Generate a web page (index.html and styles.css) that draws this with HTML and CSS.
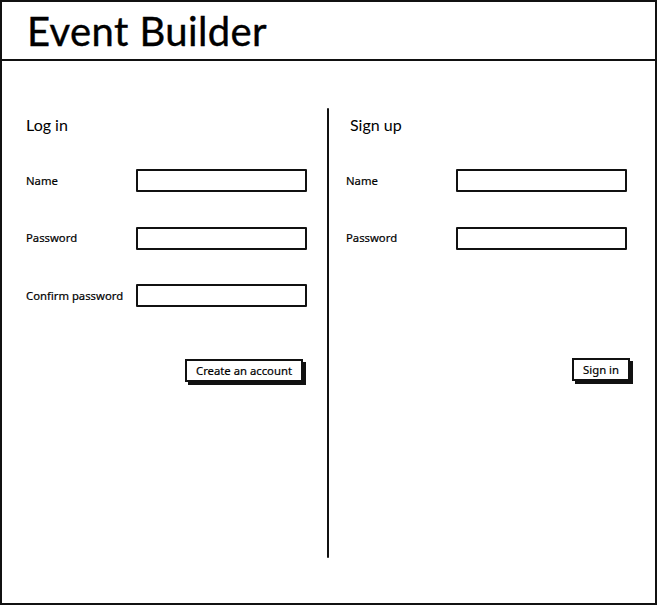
FILE: index.html
```html
<!DOCTYPE html>
<html lang="en">
<head>
<meta charset="utf-8">
<title>Event Builder</title>
<link rel="stylesheet" href="styles.css">
</head>
<body>
<div class="frame">
  <header class="header">
    <h1 class="title">Event Builder</h1>
  </header>
  <main class="main">
    <section class="panel panel-left">
      <h2 class="panel-title">Log in</h2>
      <div class="form">
        <div class="row"><span class="label">Name</span><span class="input"></span></div>
        <div class="row"><span class="label">Password</span><span class="input"></span></div>
        <div class="row"><span class="label">Confirm password</span><span class="input"></span></div>
        <div class="actions actions-left"><button class="btn" type="button">Create an account</button></div>
      </div>
    </section>
    <div class="divider"></div>
    <section class="panel panel-right">
      <h2 class="panel-title panel-title-indent">Sign up</h2>
      <div class="form">
        <div class="row"><span class="label">Name</span><span class="input"></span></div>
        <div class="row"><span class="label">Password</span><span class="input"></span></div>
        <div class="actions actions-right"><button class="btn" type="button">Sign in</button></div>
      </div>
    </section>
  </main>
</div>
</body>
</html>
```

FILE: styles.css
```css
* { box-sizing: border-box; }
html, body { margin: 0; padding: 0; background: #fff; }
body { font-family: "Noto Sans", "DejaVu Sans", sans-serif; color: #000; }

.frame {
  width: 657px;
  height: 605px;
  border: 2px solid #111;
  display: flex;
  flex-direction: column;
}

.header {
  height: 59px;
  border-bottom: 2px solid #111;
  display: flex;
  align-items: center;
  padding-left: 25px;
  flex: none;
}
.title {
  margin: 0;
  font-family: Lato, "Open Sans", sans-serif;
  font-weight: 400;
  font-size: 40px;
  line-height: 44px;
  letter-spacing: 0.4px;
  -webkit-text-stroke: 0.4px #000;
}

.main {
  flex: 1;
  display: flex;
}

.panel { padding-top: 54px; }
.panel-left { width: 325px; padding-left: 24px; }
.panel-right { flex: 1; padding-left: 17px; }

.panel-title {
  margin: 0 0 34px;
  font-family: Lato, "Open Sans", sans-serif;
  font-weight: 400;
  font-size: 16px;
  line-height: 20px;
}
.panel-title-indent { margin-left: 4px; }

.divider {
  width: 2px;
  height: 450px;
  margin-top: 47px;
  background: #111;
  border-radius: 1px;
}

.form { width: 281px; }

.row {
  display: grid;
  grid-template-columns: 110px 171px;
  align-items: center;
  height: 23px;
  margin-bottom: 34.5px;
}
.label {
  font-size: 11.3px;
  line-height: 14px;
  white-space: nowrap;
  -webkit-text-stroke: 0.2px #000;
}
.input {
  display: block;
  height: 23px;
  border: 2px solid #111;
  border-radius: 1px;
  background: #fff;
}

.actions { display: flex; justify-content: flex-end; }
.actions-left { margin-top: 52px; padding-right: 4px; }
.actions-right { margin-top: 108px; margin-right: -3px; }

.btn {
  font-family: "Noto Sans", "DejaVu Sans", sans-serif;
  font-size: 11.3px;
  line-height: 15px;
  height: 23px;
  padding: 0 9px;
  border: 2px solid #111;
  background: #fff;
  color: #000;
  box-shadow: 3px 3px 0 #111;
  border-radius: 0;
  -webkit-text-stroke: 0.2px #000;
}
```
